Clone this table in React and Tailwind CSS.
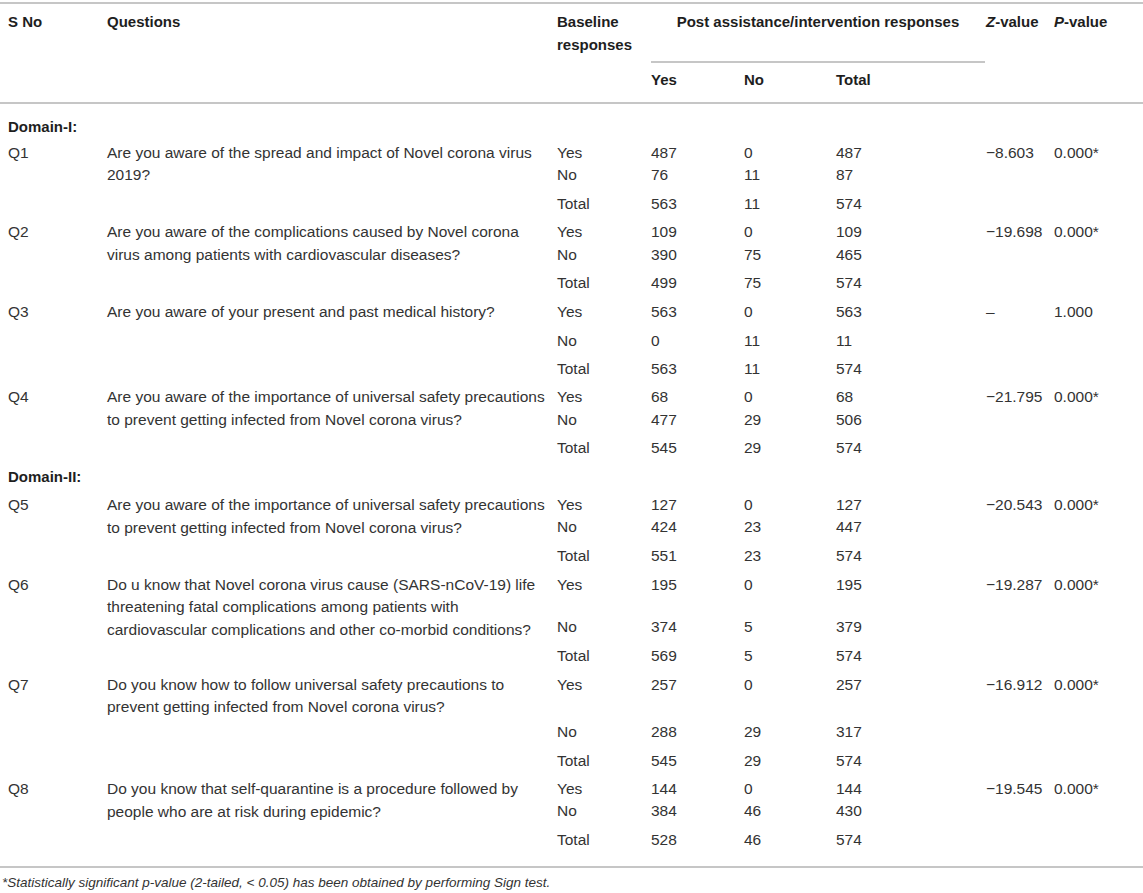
import React from 'react';

// Column widths shared by header and body rows
const W = {
    sno: 'w-[99px]',
    q: 'w-[450px]',
    base: 'w-[94px]',
    yes: 'w-[93px]',
    no: 'w-[92px]',
    total: 'w-[150px]',
    z: 'w-[68px]',
    p: 'w-[97px]',
};

const domains = [
    {
        title: 'Domain-I:',
        first: true,
        groups: [
            {
                sno: 'Q1',
                q: ['Are you aware of the spread and impact of Novel corona virus', '2019?'],
                z: '\u22128.603', p: '0.000*',
                rows: [
                    ['Yes', '487', '0', '487', 'h-[22.5px]'],
                    ['No', '76', '11', '87', 'h-[28.5px]'],
                    ['Total', '563', '11', '574', 'h-[28.5px]'],
                ],
            },
            {
                sno: 'Q2',
                q: ['Are you aware of the complications caused by Novel corona', 'virus among patients with cardiovascular diseases?'],
                z: '\u221219.698', p: '0.000*',
                rows: [
                    ['Yes', '109', '0', '109', 'h-[22.5px]'],
                    ['No', '390', '75', '465', 'h-[28.5px]'],
                    ['Total', '499', '75', '574', 'h-[28.5px]'],
                ],
            },
            {
                sno: 'Q3',
                q: ['Are you aware of your present and past medical history?'],
                z: '\u2013', p: '1.000',
                rows: [
                    ['Yes', '563', '0', '563', 'h-[29px]'],
                    ['No', '0', '11', '11', 'h-[28px]'],
                    ['Total', '563', '11', '574', 'h-[28.5px]'],
                ],
            },
            {
                sno: 'Q4',
                q: ['Are you aware of the importance of universal safety precautions', 'to prevent getting infected from Novel corona virus?'],
                z: '\u221221.795', p: '0.000*',
                rows: [
                    ['Yes', '68', '0', '68', 'h-[22.5px]'],
                    ['No', '477', '29', '506', 'h-[28.5px]'],
                    ['Total', '545', '29', '574', 'h-[28.5px]'],
                ],
            },
        ],
    },
    {
        title: 'Domain-II:',
        groups: [
            {
                sno: 'Q5',
                q: ['Are you aware of the importance of universal safety precautions', 'to prevent getting infected from Novel corona virus?'],
                z: '\u221220.543', p: '0.000*',
                rows: [
                    ['Yes', '127', '0', '127', 'h-[22px]'],
                    ['No', '424', '23', '447', 'h-[28.8px]'],
                    ['Total', '551', '23', '574', 'h-[28.8px]'],
                ],
            },
            {
                sno: 'Q6',
                q: ['Do u know that Novel corona virus cause (SARS-nCoV-19) life', 'threatening fatal complications among patients with', 'cardiovascular complications and other co-morbid conditions?'],
                z: '\u221219.287', p: '0.000*',
                rows: [
                    ['Yes', '195', '0', '195', 'h-[42.2px]'],
                    ['No', '374', '5', '379', 'h-[29.2px]'],
                    ['Total', '569', '5', '574', 'h-[28.9px]'],
                ],
            },
            {
                sno: 'Q7',
                q: ['Do you know how to follow universal safety precautions to', 'prevent getting infected from Novel corona virus?'],
                z: '\u221216.912', p: '0.000*',
                rows: [
                    ['Yes', '257', '0', '257', 'h-[47.1px]'],
                    ['No', '288', '29', '317', 'h-[28.9px]'],
                    ['Total', '545', '29', '574', 'h-[28.3px]'],
                ],
            },
            {
                sno: 'Q8',
                q: ['Do you know that self-quarantine is a procedure followed by', 'people who are at risk during epidemic?'],
                z: '\u221219.545', p: '0.000*',
                rows: [
                    ['Yes', '144', '0', '144', 'h-[22.3px]'],
                    ['No', '384', '46', '430', 'h-[28.8px]'],
                    ['Total', '528', '46', '574', 'h-[28.5px]'],
                ],
            },
        ],
    },
];

const QuestionGroup = ({ g }) => (
    <div className="flex">
        <div className={`${W.sno} shrink-0 pl-2 pt-[3px]`}>{g.sno}</div>
        <div className={`${W.q} shrink-0 pl-2 pt-[3px] whitespace-nowrap`}>
            {g.q.map((line, i) => <div key={i}>{line}</div>)}
        </div>
        <div className="flex flex-col">
            {g.rows.map(([label, yes, no, total, h], i) => (
                <div key={label} className={`flex ${h} pt-[3px]`}>
                    <div className={`${W.base} shrink-0 pl-2`}>{label}</div>
                    <div className={`${W.yes} shrink-0 pl-2`}>{yes}</div>
                    <div className={`${W.no} shrink-0 pl-2`}>{no}</div>
                    <div className={`${W.total} shrink-0 pl-2`}>{total}</div>
                    <div className={`${W.z} shrink-0 pl-2 whitespace-nowrap`}>{i === 0 ? g.z : ''}</div>
                    <div className={`${W.p} shrink-0 pl-2`}>{i === 0 ? g.p : ''}</div>
                </div>
            ))}
        </div>
    </div>
);

export default function App() {
    return (
        <div className="w-[1143px] h-[893px] overflow-hidden bg-white text-[#333] text-[15.5px] leading-[22.5px] font-['Liberation_Sans',Arial,sans-serif]">
            {/* Header */}
            <div className="mt-[2px] flex h-[102px] border-t-2 border-b-2 border-[#c6c6c6] text-[15px] font-bold text-[#1e1e1e]">
                <div className={`${W.sno} shrink-0 pl-2 pt-[7px]`}>S No</div>
                <div className={`${W.q} shrink-0 pl-2 pt-[7px]`}>Questions</div>
                <div className={`${W.base} shrink-0 pl-2 pt-[7px]`}>Baseline<br />responses</div>
                <div className="w-[335px] shrink-0 flex flex-col">
                    <div className="ml-2 w-[334px] h-[59px] pt-[7px] border-b-2 border-[#c6c6c6] text-center whitespace-nowrap">
                        Post assistance/intervention responses
                    </div>
                    <div className="flex pt-[6px]">
                        <div className={`${W.yes} shrink-0 pl-2`}>Yes</div>
                        <div className={`${W.no} shrink-0 pl-2`}>No</div>
                        <div className={`${W.total} shrink-0 pl-2`}>Total</div>
                    </div>
                </div>
                <div className={`${W.z} shrink-0 pl-2 pt-[7px] whitespace-nowrap`}><i>Z</i>-value</div>
                <div className={`${W.p} shrink-0 pl-2 pt-[7px] whitespace-nowrap`}><i>P</i>-value</div>
            </div>

            {/* Body */}
            <div className="pb-[11px] border-b-2 border-[#c6c6c6]">
                {domains.map((d) => (
                    <div key={d.title}>
                        <div className={d.first ? 'h-[34.5px] pt-[11.5px] pl-2 text-[15px] font-bold text-[#1e1e1e]' : 'h-[28.5px] pt-[3px] pl-2 text-[15px] font-bold text-[#1e1e1e]'}>
                            {d.title}
                        </div>
                        {d.groups.map((g) => <QuestionGroup key={g.sno} g={g} />)}
                    </div>
                ))}
            </div>

            <p className="mt-[6px] pl-[2px] text-[13.5px] leading-[18px] italic">
                *Statistically significant p-value (2-tailed, &lt; 0.05) has been obtained by performing Sign test.
            </p>
        </div>
    );
}
